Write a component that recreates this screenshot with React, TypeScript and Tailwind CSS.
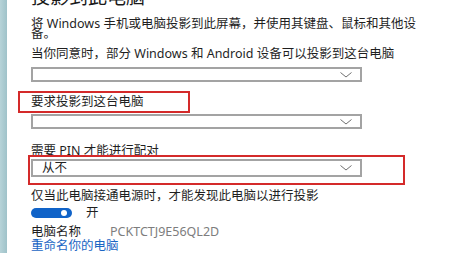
import React from "react";

function Chevron() {
  return (
    <svg width="12" height="6" viewBox="0 0 12 6" fill="none">
      <path d="M0.5 0.5 L6 5 L11.5 0.5" stroke="#707070" strokeWidth="1" />
    </svg>
  );
}

function Dropdown({ value, className }: { value?: string; className?: string }) {
  return (
    <div
      className={
        "flex w-[331px] items-center justify-between border-2 border-[#a3a3a3] bg-white pl-[9px] pr-[8px] " +
        (className ?? "")
      }
    >
      <span className="leading-none text-[#222]">{value}</span>
      <Chevron />
    </div>
  );
}

export default function App() {
  return (
    <div
      className="flex h-[253px] w-[473px] overflow-hidden bg-white text-[12.5px] text-[#1f1f1f]"
      style={{ fontFamily: '"Noto Sans", "Noto Sans CJK SC", sans-serif' }}
    >
      <div className="w-[7px] shrink-0 bg-gradient-to-r from-[#b7d3d8] to-[#9fc2c9]" />
      <div className="flex flex-col pl-[24px]">
        <h1 className="-mt-[14px] h-[22px] text-[19px] leading-[22px] text-[#1a1a1a]">投影到此电脑</h1>

        <div className="mt-[11px] h-[10px] whitespace-nowrap leading-[10px]">
          将 Windows 手机或电脑投影到此屏幕，并使用其键盘、鼠标和其他设
        </div>
        <div className="h-[10px] leading-[10px]">备。</div>

        <div className="mt-[8px] h-[14px] leading-[14px]">
          当你同意时，部分 Windows 和 Android 设备可以投影到这台电脑
        </div>
        <Dropdown className="mt-[6px] h-[16px]" />

        <div className="-ml-[13px] mt-[9px] flex h-[22px] w-[172px] items-center border-2 border-[#d42a2a] pl-[11px]">
          要求投影到这台电脑
        </div>
        <Dropdown className="mt-[1px] h-[16px]" />

        <div className="mt-[15px] h-[14px] leading-[14px]">需要 PIN 才能进行配对</div>
        <div className="-ml-[3px] -mt-[3px] h-[32px] w-[377px] border-2 border-[#d42a2a] pl-[1px] pt-[2px]">
          <Dropdown value="从不" className="h-[18px]" />
        </div>

        <div className="mt-[4px] h-[14px] leading-[14px]">仅当此电脑接通电源时，才能发现此电脑以进行投影</div>

        <div className="mt-[4px] flex h-[12px] items-center">
          <div className="flex h-[10px] w-[41px] items-center justify-end rounded-full bg-[#1063c8] pr-[5px]">
            <div className="h-[6px] w-[6px] rounded-full bg-white" />
          </div>
          <span className="ml-[14px] leading-none">开</span>
        </div>

        <div className="mt-[6px] flex h-[14px] items-center leading-[14px]">
          <span className="w-[79px]">电脑名称</span>
          <span className="text-[#7d7d7d]">PCKTCTJ9E56QL2D</span>
        </div>
        <div className="h-[14px] leading-[14px] text-[#1a66c4]">重命名你的电脑</div>
      </div>
    </div>
  );
}
